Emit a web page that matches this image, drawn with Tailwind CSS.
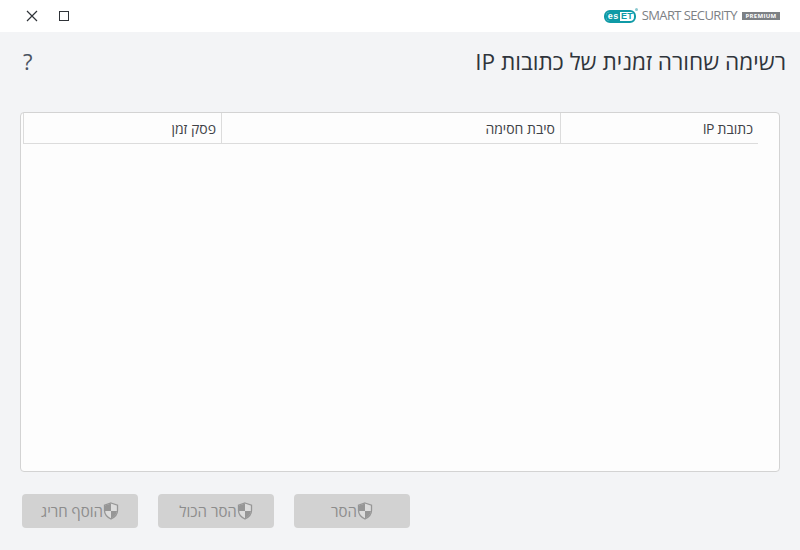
<!DOCTYPE html>
<html lang="he" dir="rtl">
<head>
<meta charset="utf-8">
<script src="https://cdn.jsdelivr.net/npm/@tailwindcss/browser@4"></script>
</head>
<body class="w-[800px] h-[550px] overflow-hidden bg-[#f3f4f6] font-['Open_Sans','Noto_Sans',sans-serif] text-[#3b3f45]">
<header dir="ltr" class="h-8 bg-white flex items-center justify-between pl-[26px] pr-5">
  <div class="flex items-center gap-[21px]">
    <svg width="12" height="12" viewBox="0 0 12 12" fill="none" stroke="#2f3338" stroke-width="1.2"><path d="M1 1l10 10M11 1L1 11"/></svg>
    <span class="w-[10px] h-[10px] border border-[#2f3338]"></span>
  </div>
  <div class="flex items-center">
    <div class="relative flex items-center h-[13px] w-[32px] rounded-[6px] border-2 border-[#0f9aa6] font-['Liberation_Sans',sans-serif] font-bold text-[9px] leading-none">
      <span class="bg-[#0f9aa6] text-white h-full flex items-center pl-[2px] pr-[1px] tracking-[0.6px] rounded-l-[4px]">es</span>
      <span class="text-[#0f9aa6] h-full flex items-center pl-[1px] tracking-[0.4px]">ET</span>
      <span class="absolute -right-[4px] -top-[4px] w-[3px] h-[3px] rounded-full bg-[#8cc9cf]"></span>
    </div>
    <span class="ml-[6px] text-[13px] tracking-[-0.6px] text-[#7d8185]">SMART SECURITY</span>
    <span class="ml-[5px] w-[38px] h-2 bg-[#7d8185] text-white text-[6px] font-bold leading-2 text-center tracking-[0.3px]">PREMIUM</span>
  </div>
</header>
<main class="px-5">
  <div class="h-[80px] flex items-start justify-between pt-[15px]">
    <h1 class="text-[22.6px] leading-[30px] font-normal text-[#2f343b] mr-[-6px]">רשימה שחורה זמנית של כתובות IP</h1>
    <span class="text-[22px] leading-[30px] text-[#4a5260] ml-[3px] -mt-[1px]">?</span>
  </div>
  <section class="h-[360px] bg-[#fdfdfd] border border-[#d3d3d3] rounded-[4px]">
    <div class="flex h-[31px] mr-[21px] ml-[2px] border-b border-[#dcdcdc] text-[14px] text-[#3f4247]">
      <div class="w-[198px] border-l border-[#dcdcdc] pr-[5px] flex items-center gap-1">כתובת <span class="tracking-[-0.8px]">IP</span></div>
      <div class="w-[339px] border-l border-[#dcdcdc] pr-[5px] flex items-center">סיבת חסימה</div>
      <div class="flex-1 border-l border-[#dcdcdc] pr-[5px] flex items-center">פסק זמן</div>
    </div>
  </section>
  <div class="flex justify-end gap-5 mt-[22px] pl-[2px]">
    <button class="w-[116px] h-[34px] rounded-[4px] bg-[#d2d2d2] text-[#8c8c8c] text-[15px] flex items-center justify-center">
      <svg width="16" height="18" viewBox="0 0 16 18"><path d="M8 1l6.500 2.200v5.300c0 4-2.800 6.700-6.500 8.500C4.300 15.200 1.500 12.500 1.500 8.500V3.200z" fill="#dcdcdc" stroke="#969696" stroke-width="1.300"/><path d="M8 1.500V9H2v-.5V3.500zM8 9h6c-.3 3.500-3 6-6 7.500z" fill="#969696"/></svg>הסר</button>
    <button class="w-[116px] h-[34px] rounded-[4px] bg-[#d2d2d2] text-[#8c8c8c] text-[15px] flex items-center justify-center">
      <svg width="16" height="18" viewBox="0 0 16 18"><path d="M8 1l6.500 2.200v5.300c0 4-2.800 6.700-6.500 8.500C4.300 15.200 1.500 12.500 1.500 8.500V3.200z" fill="#dcdcdc" stroke="#969696" stroke-width="1.300"/><path d="M8 1.500V9H2v-.5V3.500zM8 9h6c-.3 3.500-3 6-6 7.500z" fill="#969696"/></svg>הסר הכול</button>
    <button class="w-[116px] h-[34px] rounded-[4px] bg-[#d2d2d2] text-[#8c8c8c] text-[15px] flex items-center justify-center">
      <svg width="16" height="18" viewBox="0 0 16 18"><path d="M8 1l6.500 2.200v5.300c0 4-2.800 6.700-6.500 8.500C4.300 15.200 1.500 12.500 1.500 8.500V3.200z" fill="#dcdcdc" stroke="#969696" stroke-width="1.300"/><path d="M8 1.500V9H2v-.5V3.500zM8 9h6c-.3 3.500-3 6-6 7.500z" fill="#969696"/></svg>הוסף חריג</button>
  </div>
</main>
</body>
</html>
